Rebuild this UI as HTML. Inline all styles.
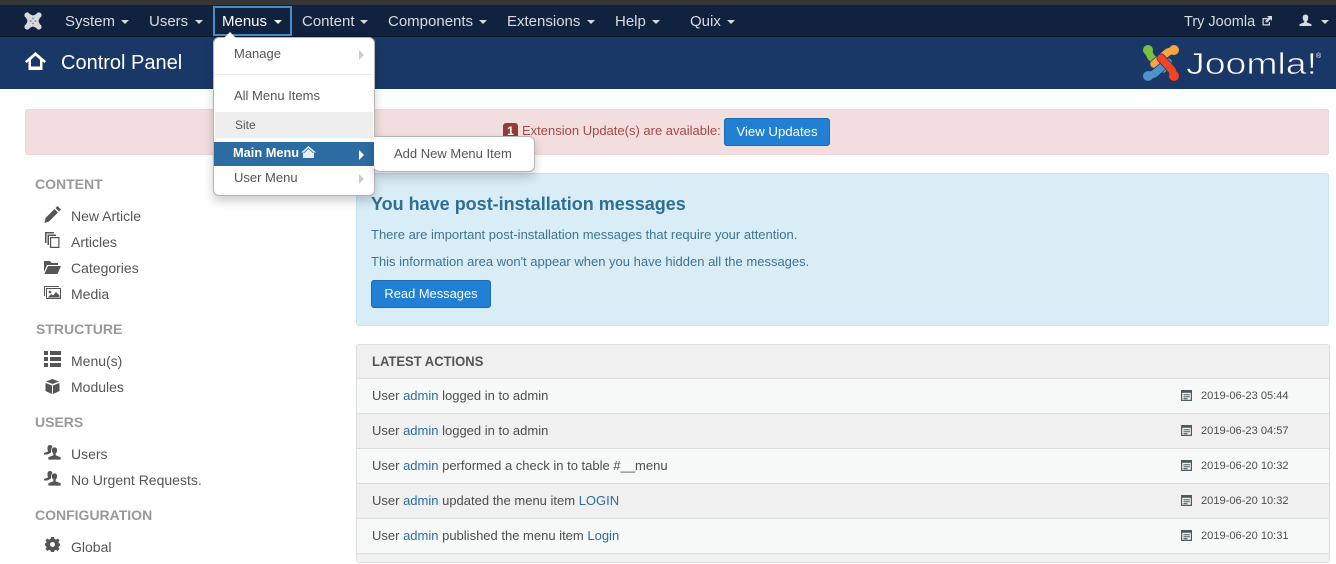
<!DOCTYPE html>
<html lang="en"><head><meta charset="utf-8"><title>Control Panel</title>
<style>
*{box-sizing:border-box}
html,body{margin:0;padding:0;width:1336px;height:564px;overflow:hidden}
body{position:relative;background:#fff;font-family:"Liberation Sans",sans-serif;font-size:14px;color:#515151}
#w{position:absolute;left:0;top:0;width:1336px;height:564px;overflow:hidden}
.a{position:absolute;white-space:nowrap}
.nav{font-size:15px;color:#d9dbe0;line-height:18px;top:13px}
.car{position:absolute;width:0;height:0;border-left:4px solid transparent;border-right:4px solid transparent;border-top:4px solid #d9dbe0}
.h{font-size:14px;font-weight:bold;color:#999;line-height:16px;left:35px}
.l{left:71px;line-height:16px;font-size:14px;color:#555}
.i{position:absolute;fill:#555}
.m{left:234px;font-size:13px;line-height:16px;color:#555}
.ar{position:absolute;width:0;height:0;border-top:5px solid transparent;border-bottom:5px solid transparent;border-left:5px solid #ccc}
.btn{position:absolute;background:#2180d3;border:1px solid #1a6cb2;border-radius:3px;color:#fff;text-align:center}
.row{position:absolute;left:357px;width:972px;height:35px;border-top:1px solid #ddd;font-size:13px;line-height:33px;padding-left:15px;color:#4d4d4d}
.row a{color:#2d6ca2}
.d{position:absolute;left:1201px;font-size:11.1px;color:#4d4d4d;line-height:14px}
</style></head><body><div id="w">
<div class="a" style="left:0;top:0;width:1336px;height:5px;background:#353638"></div>
<div class="a" style="left:0;top:5px;width:1336px;height:32px;background:#10223e"></div>
<div class="a" style="left:0;top:36px;width:1336px;height:1px;background:#0a1729"></div>
<div class="a" style="left:0;top:37px;width:1336px;height:52px;background:#1a3867"></div>

<svg class="a" style="left:24px;top:12px" width="18" height="18" viewBox="0 0 18 18"><g fill="#d5d8dc"><circle cx="3.200" cy="3.200" r="2.800"/><circle cx="14.800" cy="3.200" r="2.800"/><circle cx="3.200" cy="14.800" r="2.800"/><circle cx="14.800" cy="14.800" r="2.800"/><path d="M3 1 9 3.500 15 1 17 3 14.500 9 17 15 15 17 9 14.500 3 17 1 15 3.500 9 1 3Z"/></g><g fill="#7a8492"><circle cx="9" cy="6.500" r=".9"/><circle cx="9" cy="11.500" r=".9"/><circle cx="6.500" cy="9" r=".9"/><circle cx="11.500" cy="9" r=".9"/></g></svg>

<div class="a nav" style="left:65px">System</div><i class="car" style="left:121px;top:20px"></i>
<div class="a nav" style="left:149px">Users</div><i class="car" style="left:195px;top:20px"></i>
<div class="a" style="left:213px;top:6px;width:79px;height:30px;border:2px solid #4a8cc7"></div>
<div class="a nav" style="left:222px;color:#fff">Menus</div><i class="car" style="left:274px;top:20px;border-top-color:#fff"></i>
<div class="a nav" style="left:302px">Content</div><i class="car" style="left:360px;top:20px"></i>
<div class="a nav" style="left:388px">Components</div><i class="car" style="left:479px;top:20px"></i>
<div class="a nav" style="left:507px">Extensions</div><i class="car" style="left:587px;top:20px"></i>
<div class="a nav" style="left:615px">Help</div><i class="car" style="left:652px;top:20px"></i>
<div class="a nav" style="left:690px">Quix</div><i class="car" style="left:727px;top:20px"></i>
<div class="a nav" style="left:1184px;font-size:14.5px">Try Joomla</div>
<svg class="a" style="left:1261px;top:15px" width="12" height="12" viewBox="0 0 12 12"><path d="M1.500 3h5v1.200H2.700v5.100h5.100V7H9v3.500H1.500Z" fill="#d9dbe0"/><path d="M6 1h5v5L9.300 4.300 5.800 7.800 4.200 6.200 7.700 2.700Z" fill="#d9dbe0"/></svg>
<svg class="a" style="left:1299px;top:14px" width="13" height="13" viewBox="0 0 13 13"><path d="M6.500 0.500C8.500 0.500 9.300 2 9.300 3.700 9.300 5.300 8.500 6.800 7.700 7.400V8.300L12.500 10.300V12H0.500V10.300L5.300 8.300V7.400C4.500 6.800 3.700 5.300 3.700 3.700 3.700 2 4.500 0.500 6.500 0.500Z" fill="#d9dbe0"/></svg>
<i class="car" style="left:1321px;top:20px"></i>

<svg class="a" style="left:25px;top:52px" width="21" height="19" viewBox="0 0 21 19"><path fill-rule="evenodd" d="M10.500 0 21 9.200 19.400 11 17.500 9.400V18H3.500V9.400L1.600 11 0 9.200ZM10.500 3.800 6 7.800V14.500H15V7.800Z" fill="#fff"/></svg>
<div class="a" style="left:61px;top:51px;font-size:20px;line-height:24px;color:#fff">Control Panel</div>

<svg class="a" style="left:1142px;top:44px" width="38" height="38" viewBox="0 0 38 38">
<g fill="none" stroke-linecap="round" stroke-linejoin="round">
<path d="M6 7 9 13 21 25" stroke="#1a3867" stroke-width="9"/><path d="M6 7 9 13 21 25" stroke="#7ac143" stroke-width="7.500"/>
<path d="M32 6 26 8 12 20" stroke="#1a3867" stroke-width="9"/><path d="M32 6 26 8 12 20" stroke="#f9a541" stroke-width="7.500"/>
<path d="M6 32 12 30 26 18" stroke="#1a3867" stroke-width="9"/><path d="M6 32 12 30 26 18" stroke="#5091cd" stroke-width="7.500"/>
<path d="M32 32 30 26 19 14" stroke="#1a3867" stroke-width="9"/><path d="M32 32 30 26 19 14" stroke="#f44321" stroke-width="7.500"/>
</g>
<circle cx="6" cy="6" r="5" fill="#7ac143"/><circle cx="32" cy="6" r="5" fill="#f9a541"/><circle cx="6" cy="32" r="5" fill="#5091cd"/><circle cx="32" cy="32" r="5" fill="#f44321"/>
</svg>
<svg class="a" style="left:1184px;top:46px" width="142" height="36" viewBox="0 0 142 36"><text x="2" y="28" font-family="Liberation Sans,sans-serif" font-size="31" fill="#fff" stroke="#1a3867" stroke-width=".7" textLength="131" lengthAdjust="spacingAndGlyphs">Joomla!</text><text x="132" y="12" font-family="Liberation Sans,sans-serif" font-size="7" fill="#fff">®</text></svg>

<div class="a" style="left:25px;top:109px;width:1304px;height:46px;background:#f2dede;border:1px solid #eed3d7;border-radius:3px"></div>
<div class="a" style="left:503px;top:123px;width:15px;height:16px;background:#953b39;border-radius:3px;color:#fff;font-weight:bold;font-size:12px;line-height:17px;text-align:center">1</div>
<div class="a" style="left:522px;top:123px;font-size:13px;line-height:16px;color:#a24a48">Extension Update(s) are available:</div>
<div class="btn" style="left:724px;top:118px;width:106px;height:28px;line-height:26px;font-size:13.2px">View Updates</div>

<div class="a" style="left:356px;top:173px;width:973px;height:153px;background:#d9edf7;border:1px solid #bce8f1;border-radius:3px"></div>
<div class="a" style="left:371px;top:193px;font-size:18px;line-height:22px;font-weight:bold;color:#2f6f95">You have post-installation messages</div>
<div class="a" style="left:371px;top:227px;font-size:13px;line-height:16px;color:#3f7393">There are important post-installation messages that require your attention.</div>
<div class="a" style="left:371px;top:254px;font-size:13px;line-height:16px;color:#3f7393">This information area won't appear when you have hidden all the messages.</div>
<div class="btn" style="left:371px;top:280px;width:120px;height:28px;line-height:26px;font-size:12.9px">Read Messages</div>

<div class="a" style="left:356px;top:344px;width:974px;height:219px;border:1px solid #ddd;border-radius:3px;background:#f0f0f0"></div>
<div class="a" style="left:372px;top:353px;font-size:14px;font-weight:bold;line-height:16px;color:#555;transform-origin:left;transform:scaleX(.93)">LATEST ACTIONS</div>
<div class="row" style="top:378px;background:#f7f9f9">User <a>admin</a> logged in to admin</div>
<div class="row" style="top:413px;background:#f0f0f0">User <a>admin</a> logged in to admin</div>
<div class="row" style="top:448px;background:#f7f9f9">User <a>admin</a> performed a check in to table #__menu</div>
<div class="row" style="top:483px;background:#f0f0f0">User <a>admin</a> updated the menu item <a>LOGIN</a></div>
<div class="row" style="top:518px;background:#f7f9f9">User <a>admin</a> published the menu item <a>Login</a></div>
<div class="row" style="top:553px;background:#f0f0f0;height:9px"></div>

<svg width="0" height="0" style="position:absolute"><defs><g id="cal"><path d="M0 0H11V11H0Z" fill="#4f5a5c"/><path d="M1.200 2.800H9.800V9.800H1.200Z" fill="#eef2f2"/><path d="M2.500 4.200H8.800V5.300H2.500ZM2.500 6.200H8.800V7.300H2.500ZM2.500 8.100H6.500V9.200H2.500Z" fill="#4f5a5c"/></g></defs></svg>
<svg class="a" style="left:1181px;top:390px" width="12" height="12"><use href="#cal"/></svg><div class="d" style="top:389px">2019-06-23 05:44</div>
<svg class="a" style="left:1181px;top:425px" width="12" height="12"><use href="#cal"/></svg><div class="d" style="top:424px">2019-06-23 04:57</div>
<svg class="a" style="left:1181px;top:460px" width="12" height="12"><use href="#cal"/></svg><div class="d" style="top:459px">2019-06-20 10:32</div>
<svg class="a" style="left:1181px;top:495px" width="12" height="12"><use href="#cal"/></svg><div class="d" style="top:494px">2019-06-20 10:32</div>
<svg class="a" style="left:1181px;top:530px" width="12" height="12"><use href="#cal"/></svg><div class="d" style="top:529px">2019-06-20 10:31</div>

<div class="a h" style="top:176px">CONTENT</div>
<svg class="i" style="left:44px;top:206px" width="17" height="17" viewBox="0 0 17 17"><path d="M13.500 0 17 3.500 15 5.500 11.500 2ZM10.500 3 14 6.500 5 15.500 0.500 17 1.500 12Z"/></svg>
<div class="a l" style="top:208px">New Article</div>
<svg class="i" style="left:45px;top:232px" width="15" height="16" viewBox="0 0 15 16"><path d="M0 0H9V1.500H1.500V11H0Z"/><path d="M2.500 2.500H11V4H4V13H2.500Z"/><path fill-rule="evenodd" d="M5 5H14.500V16H5ZM6.200 6.200V14.800H13.300V6.200Z"/></svg>
<div class="a l" style="top:234px">Articles</div>
<svg class="i" style="left:44px;top:261px" width="17" height="13" viewBox="0 0 17 13"><path d="M0 0H6L7.500 2H14V4H3L0 11Z"/><path d="M4 5H17L13.500 13H0.500Z"/></svg>
<div class="a l" style="top:260px">Categories</div>
<svg class="i" style="left:44px;top:286px" width="17" height="13" viewBox="0 0 17 13"><path d="M0 0H15V1H1V10H0Z"/><path fill-rule="evenodd" d="M2 2H17V13H2ZM3 3V12H16V3Z"/><circle cx="6" cy="6" r="1.300"/><path d="M3.500 11.500 7.500 8 9 9.500 12 6 15.500 9.500V11.500Z"/></svg>
<div class="a l" style="top:286px">Media</div>

<div class="a h" style="top:321px;left:36px">STRUCTURE</div>
<svg class="i" style="left:44px;top:351px" width="17" height="16" viewBox="0 0 17 16"><path d="M0 0H4V4H0ZM6 0H17V4H6ZM0 6H4V10H0ZM6 6H17V10H6ZM0 12H4V16H0ZM6 12H17V16H6Z"/></svg>
<div class="a l" style="top:353px">Menu(s)</div>
<svg class="i" style="left:45px;top:379px" width="15" height="15" viewBox="0 0 15 15"><path d="M7.500 0 14 2.500 7.500 5 1 2.500ZM0.500 4 7 6.500V15L0.500 12ZM14.500 4 8 6.500V15L14.500 12Z"/></svg>
<div class="a l" style="top:379px">Modules</div>

<div class="a h" style="top:414px">USERS</div>
<svg class="i" style="left:44px;top:445px" width="17" height="15" viewBox="0 0 17 15"><path d="M6 0C8 0 8.500 1.500 8.500 3 8.500 4.500 7.500 6 7 6.500V7.500L3.500 9.500H0V8L4 6.500V6C3.500 5.500 3.500 4.500 3.500 3 3.500 1.500 4 0 6 0Z"/><path stroke="#fff" stroke-width=".7" d="M10.500 2C12.700 2 13.500 3.500 13.500 5.300 13.500 7 12.600 8.300 12 8.800V10L17 12V15H4V12L9 10V8.800C8.400 8.300 7.500 7 7.500 5.300 7.500 3.500 8.300 2 10.500 2Z"/></svg>
<div class="a l" style="top:446px">Users</div>
<svg class="i" style="left:44px;top:471px" width="17" height="15" viewBox="0 0 17 15"><path d="M6 0C8 0 8.500 1.500 8.500 3 8.500 4.500 7.500 6 7 6.500V7.500L3.500 9.500H0V8L4 6.500V6C3.500 5.500 3.500 4.500 3.500 3 3.500 1.500 4 0 6 0Z"/><path stroke="#fff" stroke-width=".7" d="M10.500 2C12.700 2 13.500 3.500 13.500 5.300 13.500 7 12.600 8.300 12 8.800V10L17 12V15H4V12L9 10V8.800C8.400 8.300 7.500 7 7.500 5.300 7.500 3.500 8.300 2 10.500 2Z"/></svg>
<div class="a l" style="top:472px">No Urgent Requests.</div>

<div class="a h" style="top:507px">CONFIGURATION</div>
<svg class="i" style="left:45px;top:537px" width="15" height="15" viewBox="0 0 15 15"><path fill-rule="evenodd" d="M6 0H9L9.500 2 11 2.600 12.800 1.500 14.500 3.200 13.400 5 14 6.500 15 6.500V8.500L14 9 13.400 10.500 14.500 12 12.500 14 11 12.900 9.500 13.500 9 15H6L5.500 13.500 4 12.900 2.500 14 0.500 12 1.600 10.500 1 9 0 8.500V6.500L1 6 1.600 5 0.500 3.200 2.200 1.500 4 2.600 5.500 2ZM7.500 5A2.500 2.500 0 1 0 7.500 10 2.500 2.500 0 1 0 7.500 5Z"/></svg>
<div class="a l" style="top:539px">Global</div>

<div class="a" style="left:213px;top:37px;width:162px;height:159px;background:#fff;border:1px solid #b5b5b5;border-radius:6px;box-shadow:0 5px 10px rgba(0,0,0,.2)"></div>
<div class="a" style="left:224px;top:32px;width:0;height:0;border-left:6px solid transparent;border-right:6px solid transparent;border-bottom:6px solid #fff"></div>
<div class="a m" style="top:46px">Manage</div><i class="ar" style="left:359px;top:50px"></i>
<div class="a" style="left:214px;top:74px;width:160px;height:1px;background:#eee"></div>
<div class="a m" style="top:88px">All Menu Items</div>
<div class="a" style="left:215px;top:112px;width:158px;height:26px;background:#eee"></div>
<div class="a m" style="top:117px;left:235px;font-size:12px;color:#555">Site</div>
<div class="a" style="left:214px;top:142px;width:160px;height:24px;background:#2d6ca2"></div>
<div class="a m" style="top:145px;left:233px;color:#fff;font-weight:bold;font-size:12.8px">Main Menu</div>
<svg class="a" style="left:301px;top:146px" width="15" height="12" viewBox="0 0 15 12"><path d="M7.500 0 15 6.500H13V12H2V6.500H0Z" fill="#e8eef5"/><path d="M2.500 7 7.500 2.500 12.500 7" fill="none" stroke="#2d6ca2" stroke-width=".8"/></svg>
<i class="ar" style="left:359px;top:150px;border-left-color:#fff"></i>
<div class="a m" style="top:170px">User Menu</div><i class="ar" style="left:359px;top:174px"></i>

<div class="a" style="left:374px;top:136px;width:161px;height:36px;background:#fff;border:1px solid #b5b5b5;border-left:0;border-radius:0 6px 6px 6px;box-shadow:0 5px 10px rgba(0,0,0,.2)"></div>
<div class="a m" style="left:394px;top:146px">Add New Menu Item</div>
</div></body></html>
